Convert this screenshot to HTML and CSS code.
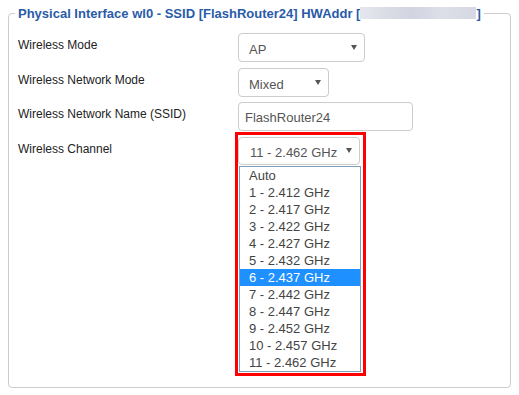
FILE: index.html
```html
<!DOCTYPE html>
<html lang="en">
<head>
    <meta charset="UTF-8">
    <meta name="viewport" content="width=device-width, initial-scale=1.0">
    <title>Wireless Settings</title>
    <link rel="stylesheet" href="styles.css">
</head>
<body>
    <fieldset class="panel">
        <legend class="panel-title">Physical Interface wl0 - SSID [FlashRouter24] HWAddr [<span class="hwaddr-blur"></span>]</legend>

        <div class="setting">
            <div class="setting-label">Wireless Mode</div>
            <div class="select select-mode">
                <span>AP</span>
                <svg class="arrow" width="6" height="5" viewBox="0 0 6 5"><path d="M0 0H6L3 5Z"/></svg>
            </div>
        </div>

        <div class="setting setting-tight">
            <div class="setting-label">Wireless Network Mode</div>
            <div class="select select-netmode">
                <span>Mixed</span>
                <svg class="arrow" width="6" height="5" viewBox="0 0 6 5"><path d="M0 0H6L3 5Z"/></svg>
            </div>
        </div>

        <div class="setting">
            <div class="setting-label">Wireless Network Name (SSID)</div>
            <div class="textbox">FlashRouter24</div>
        </div>

        <div class="setting">
            <div class="setting-label">Wireless Channel</div>
            <!-- rote Markierung um das offene Dropdown -->
            <div class="marked">
                <div class="select select-channel">
                    <span>11 - 2.462 GHz</span>
                    <svg class="arrow" width="6" height="5" viewBox="0 0 6 5"><path d="M0 0H6L3 5Z"/></svg>
                </div>
                <ul class="dropdown">
                    <li>Auto</li>
                    <li>1 - 2.412 GHz</li>
                    <li>2 - 2.417 GHz</li>
                    <li>3 - 2.422 GHz</li>
                    <li>4 - 2.427 GHz</li>
                    <li>5 - 2.432 GHz</li>
                    <li class="active">6 - 2.437 GHz</li>
                    <li>7 - 2.442 GHz</li>
                    <li>8 - 2.447 GHz</li>
                    <li>9 - 2.452 GHz</li>
                    <li>10 - 2.457 GHz</li>
                    <li>11 - 2.462 GHz</li>
                </ul>
            </div>
        </div>
    </fieldset>
</body>
</html>
```

FILE: styles.css
```css
body {
    margin: 0;
    background: #fff;
    font-family: "Liberation Sans", Arial, sans-serif;
    font-size: 12px;
    color: #222;
}

.panel {
    margin: 6px 8px 0 8px;
    padding: 12px 6px 5px 6px;
    border: 1px solid #ccc;
    border-radius: 4px;
    min-width: 0;
}

.panel-title {
    padding: 0 3px;
    font-weight: bold;
    font-size: 13px;
    line-height: 15px;
    color: #2a5ba8;
}

.hwaddr-blur {
    display: inline-block;
    width: 116px;
    height: 12px;
    vertical-align: -1px;
    background: linear-gradient(90deg, #e6e7ee 0%, #d9dbe5 25%, #d2d4e0 45%, #dcdee8 70%, #d6d8e3 100%);
}

.setting {
    display: flex;
    align-items: flex-start;
    padding-left: 3px;
    margin-bottom: 6px;
}

.setting-tight {
    margin-bottom: 5px;
}

.setting-label {
    width: 220px;
    flex: none;
    padding-top: 4px;
    line-height: 16px;
}

.select {
    display: flex;
    align-items: center;
    justify-content: space-between;
    box-sizing: border-box;
    height: 29px;
    padding: 3px 7px 0 10px;
    border: 1px solid #ccc;
    border-radius: 4px;
    background: #fff;
    color: #555;
    font-size: 13px;
}

.select .arrow {
    fill: #555;
    margin-top: -4px;
}

.select-mode { width: 127px; }
.select-netmode { width: 91px; }
.select-channel {
    width: 122px;
    height: 28px;
    padding-left: 11px;
}

.textbox {
    box-sizing: border-box;
    width: 175px;
    height: 29px;
    padding: 7px 6px 0 6px;
    border: 1px solid #ccc;
    border-radius: 4px;
    color: #555;
    font-size: 13px;
}

/* Markierung */
.marked {
    margin: -5px 0 0 -3px;
    padding: 2px 2px 1px 0;
    border: 3px solid #f00;
}

.dropdown {
    list-style: none;
    margin: 1px 0 0 1px;
    padding: 0;
    width: 122px;
    box-sizing: border-box;
    border: 1px solid #7f9db9;
    background: #fff;
}

.dropdown li {
    height: 17px;
    line-height: 17px;
    padding-left: 9px;
    color: #444;
    font-size: 13px;
}

.dropdown li.active {
    background: #1e90ff;
    color: #fff;
}
```
